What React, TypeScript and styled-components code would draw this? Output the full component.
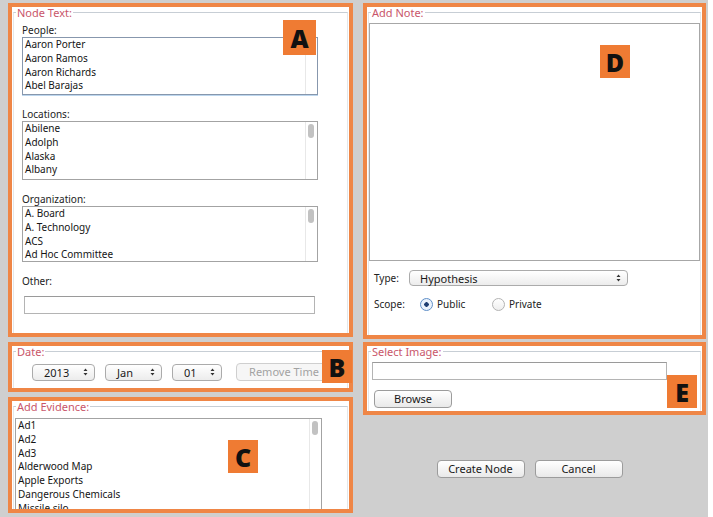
import React from 'react';
import styled, { createGlobalStyle } from 'styled-components';

const GlobalStyle = createGlobalStyle`
  html, body {
    margin: 0;
    padding: 0;
    background: #ffffff;
  }
  body {
    font-family: "Noto Sans", "DejaVu Sans", sans-serif;
    font-size: 10px;
    color: #1c1c1c;
  }
`;

const Dialog = styled.div`
  width: 708px;
  height: 517px;
  box-sizing: border-box;
  padding: 3px 0 0 8px;
  display: flex;
  gap: 10px;
  background: #cfcfcf;
  overflow: hidden;
`;

const Column = styled.div<{ $w: number }>`
  width: ${(p) => p.$w}px;
  display: flex;
  flex-direction: column;
`;

const Panel = styled.section<{ $h: number; $mt?: number }>`
  position: relative;
  box-sizing: border-box;
  height: ${(p) => p.$h}px;
  margin-top: ${(p) => p.$mt || 0}px;
  border: 4px solid #ef8646;
  background: #ffffff;
`;

const Group = styled.fieldset`
  box-sizing: border-box;
  height: calc(100% + 1px);
  margin: -1px 1px 0 1px;
  padding: 0;
  border: 1px solid #e4e7ea;
  border-top-color: #c7ced5;
  border-bottom: none;
  min-width: 0;
`;

const Legend = styled.legend`
  margin-left: 2px;
  padding: 0 1px;
  font-size: 11px;
  line-height: 13px;
  color: #c9566a;
`;

const Content = styled.div<{ $pad: string }>`
  padding: ${(p) => p.$pad};
`;

const Badge = styled.span<{ $top: number; $left?: number; $right?: number; $w?: number; $h?: number }>`
  position: absolute;
  top: ${(p) => p.$top}px;
  ${(p) => (p.$left !== undefined ? `left: ${p.$left}px;` : `right: ${p.$right}px;`)}
  width: ${(p) => p.$w || 30}px;
  height: ${(p) => p.$h || 33}px;
  display: flex;
  align-items: center;
  justify-content: center;
  background: #ef7b33;
  color: #111;
  font-family: "Open Sans", "Liberation Sans", sans-serif;
  font-weight: 800;
  font-size: 25px;
  z-index: 2;
`;

const FieldLabel = styled.div<{ $mt?: number }>`
  margin-top: ${(p) => p.$mt || 0}px;
  line-height: 14px;
  color: #222;
`;

const ListBox = styled.div<{ $w: number; $h: number; $focus?: boolean; $open?: boolean }>`
  display: flex;
  box-sizing: border-box;
  width: ${(p) => p.$w}px;
  height: ${(p) => p.$h}px;
  border: 1px solid ${(p) => (p.$focus ? '#8797ad' : '#a3a3a3')};
  border-bottom-width: ${(p) => (p.$open ? 0 : 1)}px;
  box-shadow: ${(p) => (p.$focus ? '0 1px 0 #bcd6ee' : 'none')};
  background: #fff;
  overflow: hidden;
`;

const Items = styled.ul`
  flex: 1;
  margin: 0;
  padding: 0 0 0 2px;
  list-style: none;
`;

const Item = styled.li`
  line-height: 13.8px;
  white-space: nowrap;
  color: #151515;
`;

const ScrollTrack = styled.div`
  width: 12px;
  box-sizing: border-box;
  border-left: 1px solid #e8e8e8;
  padding: 2px 0 0 2px;
`;

const Thumb = styled.div`
  width: 6px;
  height: 14px;
  border-radius: 3px;
  background: #c2c2c2;
`;

const TextInput = styled.div<{ $w: number; $ml?: number; $mt?: number }>`
  box-sizing: border-box;
  width: ${(p) => p.$w}px;
  height: 18px;
  margin-left: ${(p) => p.$ml || 0}px;
  margin-top: ${(p) => p.$mt || 0}px;
  border: 1px solid #b4b4b4;
  border-top-color: #9a9a9a;
  background: #fff;
`;

const Row = styled.div<{ $mt?: number; $pl?: number }>`
  display: flex;
  align-items: center;
  margin-top: ${(p) => p.$mt || 0}px;
  padding-left: ${(p) => p.$pl || 0}px;
`;

const Popup = styled.div<{ $w: number; $h?: number; $ml?: number; $pl?: number }>`
  box-sizing: border-box;
  width: ${(p) => p.$w}px;
  height: ${(p) => p.$h || 17}px;
  margin-left: ${(p) => p.$ml || 0}px;
  padding: 0 6px 0 ${(p) => p.$pl || 11}px;
  display: flex;
  align-items: center;
  justify-content: space-between;
  border: 1px solid #ababab;
  border-radius: 4px;
  background: linear-gradient(#ffffff, #ececec);
  font-size: 11px;
  color: #1a1a1a;
`;

const MacButton = styled.button<{ $w: number; $ml?: number; $mt?: number; $disabled?: boolean }>`
  box-sizing: border-box;
  width: ${(p) => p.$w}px;
  height: 18px;
  margin: ${(p) => p.$mt || 0}px 0 0 ${(p) => p.$ml || 0}px;
  padding: 0;
  border: 1px solid ${(p) => (p.$disabled ? '#cfcfcf' : '#9c9c9c')};
  border-radius: 4px;
  background: ${(p) => (p.$disabled ? '#f6f6f6' : 'linear-gradient(#ffffff, #e9e9e9)')};
  font-family: "Noto Sans", "DejaVu Sans", sans-serif;
  font-size: 11px;
  line-height: 16px;
  color: ${(p) => (p.$disabled ? '#a2a2a2' : '#1a1a1a')};
`;

const NoteArea = styled.div`
  box-sizing: border-box;
  height: 238px;
  border: 1px solid #a7a7a7;
  background: #fff;
`;

const RowLabel = styled.span<{ $w: number }>`
  width: ${(p) => p.$w}px;
  line-height: 14px;
  color: #222;
`;

const RadioOption = styled.label<{ $w: number }>`
  width: ${(p) => p.$w}px;
  display: flex;
  align-items: center;
  gap: 4px;
  line-height: 14px;
  color: #222;
`;

const RadioCircle = styled.span<{ $on?: boolean }>`
  box-sizing: border-box;
  width: 13px;
  height: 13px;
  border-radius: 50%;
  border: 1px solid ${(p) => (p.$on ? '#5f8fc8' : '#b3b3b3')};
  background: ${(p) =>
    p.$on ? 'radial-gradient(circle, #1e3e72 0 2px, #eaf2fc 2.5px)' : 'linear-gradient(#ffffff, #eeeeee)'};
`;

const Actions = styled.div`
  display: flex;
  justify-content: center;
  gap: 10px;
  margin-top: 45px;
  padding-right: 10px;
`;

const Arrows = () => (
  <svg width="5" height="8" viewBox="0 0 5 8">
    <path d="M0.5 3 L2.5 0.5 L4.5 3 Z M0.5 5 L2.5 7.5 L4.5 5 Z" fill="#333" />
  </svg>
);

const people = ['Aaron Porter', 'Aaron Ramos', 'Aaron Richards', 'Abel Barajas'];
const locations = ['Abilene', 'Adolph', 'Alaska', 'Albany'];
const organizations = ['A. Board', 'A. Technology', 'ACS', 'Ad Hoc Committee'];
const evidence = ['Ad1', 'Ad2', 'Ad3', 'Alderwood Map', 'Apple Exports', 'Dangerous Chemicals', 'Missile silo'];

const List: React.FC<{ items: string[]; w: number; h: number; focus?: boolean; open?: boolean }> = ({
  items,
  w,
  h,
  focus,
  open,
}) => (
  <ListBox $w={w} $h={h} $focus={focus} $open={open}>
    <Items>
      {items.map((it) => (
        <Item key={it}>{it}</Item>
      ))}
    </Items>
    <ScrollTrack>
      <Thumb />
    </ScrollTrack>
  </ListBox>
);

export default function App() {
  return (
    <>
      <GlobalStyle />
      <Dialog>
        <Column $w={345}>
          <Panel $h={334}>
            <Group>
              <Legend>Node Text:</Legend>
              <Content $pad="4px 8px 0 8px">
                <FieldLabel>People:</FieldLabel>
                <List items={people} w={296} h={58} focus />
                <FieldLabel $mt={12}>Locations:</FieldLabel>
                <List items={locations} w={296} h={59} />
                <FieldLabel $mt={12}>Organization:</FieldLabel>
                <List items={organizations} w={296} h={56} />
                <FieldLabel $mt={12}>Other:</FieldLabel>
                <TextInput $w={291} $ml={2} $mt={8} />
              </Content>
            </Group>
            <Badge $top={13} $right={33} $w={33} $h={35}>A</Badge>
          </Panel>

          <Panel $h={50} $mt={5}>
            <Group>
              <Legend>Date:</Legend>
              <Row $mt={5} $pl={18}>
                <Popup $w={63}>2013<Arrows /></Popup>
                <Popup $w={57} $ml={10}>Jan<Arrows /></Popup>
                <Popup $w={50} $ml={10}>01<Arrows /></Popup>
                <MacButton $w={96} $ml={14} $disabled>Remove Time</MacButton>
              </Row>
            </Group>
            <Badge $top={4} $right={-3}>B</Badge>
          </Panel>

          <Panel $h={116} $mt={5}>
            <Group>
              <Legend>Add Evidence:</Legend>
              <Content $pad="5px 0 0 1px">
                <List items={evidence} w={307} h={91} open />
              </Content>
            </Group>
            <Badge $top={39} $left={216}>C</Badge>
          </Panel>
        </Column>

        <Column $w={343}>
          <Panel $h={336}>
            <Group>
              <Legend>Add Note:</Legend>
              <Content $pad="4px 0 0 0">
                <NoteArea />
                <Row $mt={9} $pl={5}>
                  <RowLabel $w={35}>Type:</RowLabel>
                  <Popup $w={219} $h={16} $pl={10}>Hypothesis<Arrows /></Popup>
                </Row>
                <Row $mt={11} $pl={5}>
                  <RowLabel $w={46}>Scope:</RowLabel>
                  <RadioOption $w={72}>
                    <RadioCircle $on />
                    Public
                  </RadioOption>
                  <RadioOption $w={80}>
                    <RadioCircle />
                    Private
                  </RadioOption>
                </Row>
              </Content>
            </Group>
            <Badge $top={38} $left={233}>D</Badge>
          </Panel>

          <Panel $h={73} $mt={3}>
            <Group>
              <Legend>Select Image:</Legend>
              <Content $pad="4px 0 0 3px">
                <TextInput $w={295} />
                <MacButton $w={78} $ml={2} $mt={10}>Browse</MacButton>
              </Content>
            </Group>
            <Badge $top={29} $right={5}>E</Badge>
          </Panel>

          <Actions>
            <MacButton $w={88}>Create Node</MacButton>
            <MacButton $w={88}>Cancel</MacButton>
          </Actions>
        </Column>
      </Dialog>
    </>
  );
}
